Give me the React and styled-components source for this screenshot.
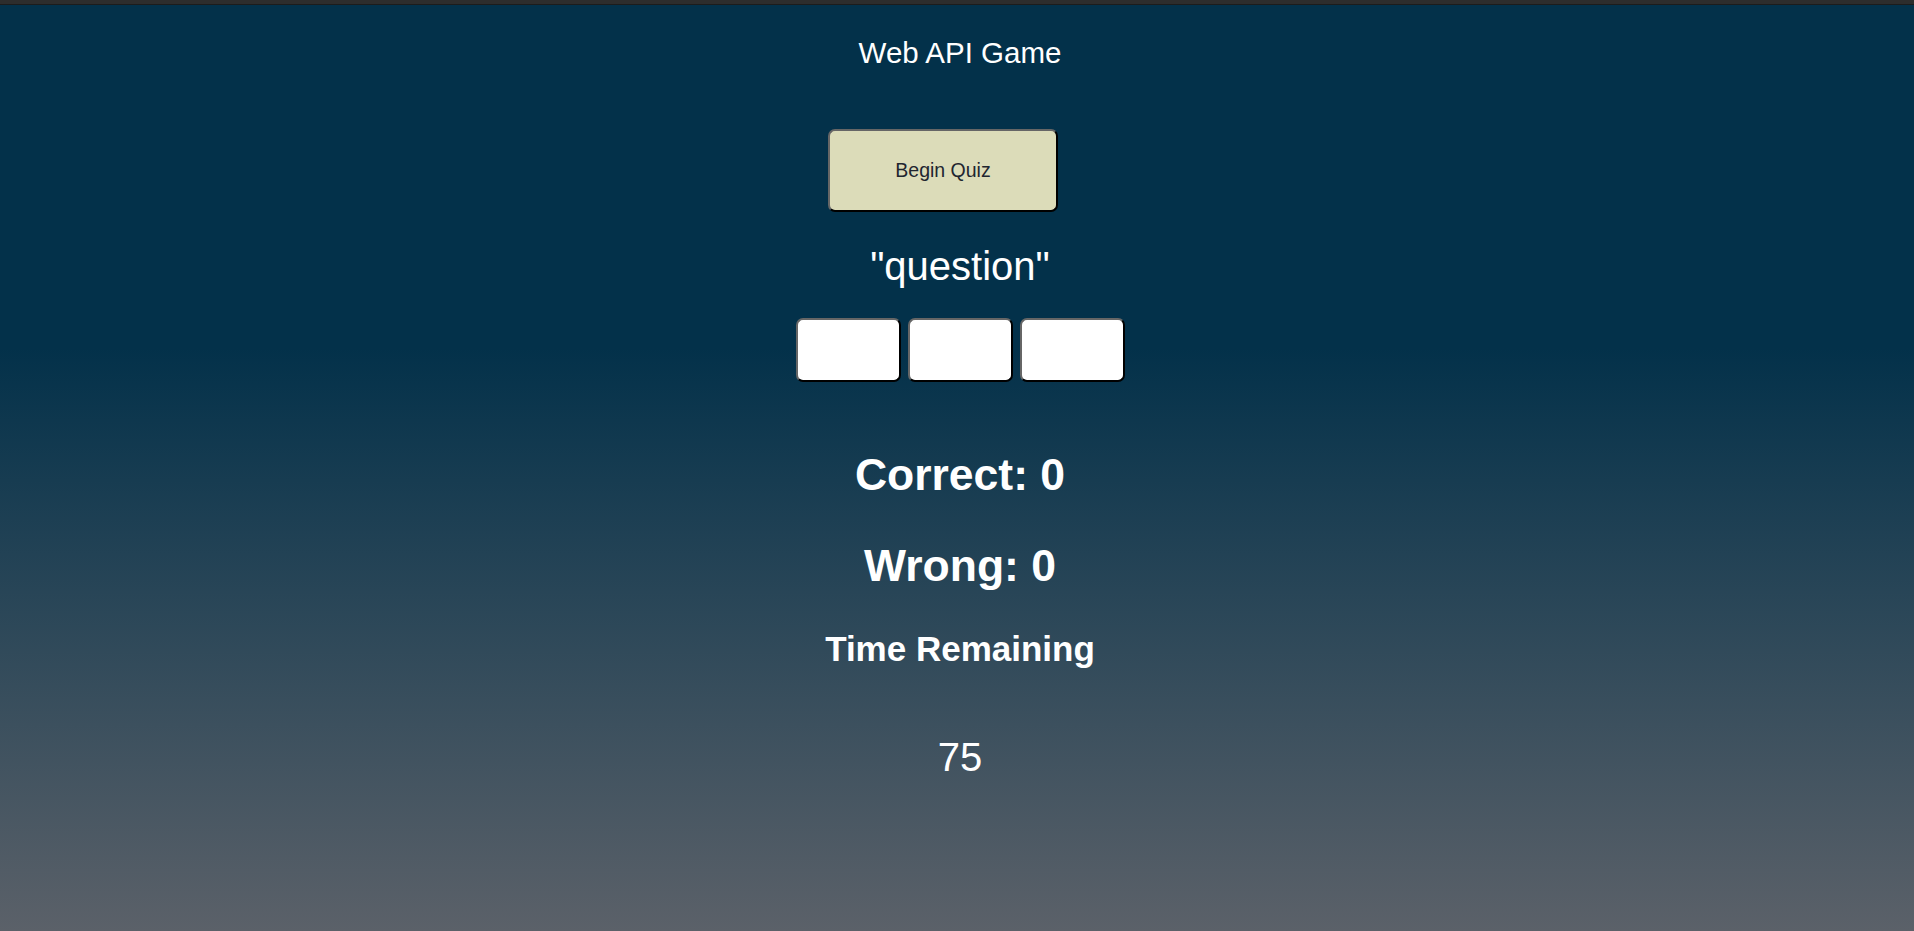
import React from 'react';
import styled, { createGlobalStyle } from 'styled-components';

const GlobalStyle = createGlobalStyle`
    html, body {
        margin: 0;
        padding: 0;
        height: 100%;
    }
    body {
        font-family: "Liberation Sans", Arial, sans-serif;
        background: #5b6169;
    }
`;

const TopBar = styled.div`
    height: 4px;
    background: #2d2d2d;
    border-bottom: 1px solid #1c1c1c;
`;

const Page = styled.main`
    min-height: 926px;
    box-sizing: border-box;
    padding-left: 6px;
    display: flex;
    flex-direction: column;
    align-items: center;
    color: #fff;
    background: linear-gradient(180deg, #03314a 0%, #03314a 37%, #5b6169 100%);
`;

const Title = styled.header`
    margin-top: 33px;
    font-size: 29.5px;
    line-height: 1;
`;

const StartButton = styled.button`
    margin-top: 61px;
    margin-right: 34px;
    width: 230px;
    height: 83px;
    box-sizing: border-box;
    background: #dcdcb9;
    color: #1f2630;
    font-family: "Liberation Sans", Arial, sans-serif;
    font-size: 19.5px;
    border: 2px solid;
    border-color: #666 #000 #000 #666;
    border-radius: 7px;
    cursor: pointer;
`;

const Question = styled.h2`
    margin: 34px 0 0;
    font-size: 40px;
    font-weight: normal;
    line-height: 1;
`;

const Choices = styled.div`
    margin-top: 32px;
    display: flex;
    gap: 7px;
`;

const Choice = styled.button`
    width: 105px;
    height: 64px;
    box-sizing: border-box;
    background: #fff;
    border: 2px solid;
    border-color: #666 #000 #000 #666;
    border-radius: 7px;
`;

const Stat = styled.h1`
    margin: ${p => p.$gap}px 0 0;
    font-size: ${p => p.$size}px;
    font-weight: bold;
    line-height: 1;
`;

const Timer = styled.div`
    margin-top: 71px;
    font-size: 40px;
    line-height: 1;
`;

export default function App() {
    return (
        <>
            <GlobalStyle />
            <TopBar />
            <Page>
                <Title>Web API Game</Title>
                <StartButton>Begin Quiz</StartButton>
                <Question>"question"</Question>
                <Choices>
                    <Choice />
                    <Choice />
                    <Choice />
                </Choices>
                <Stat $gap={71} $size={44.5}>Correct: 0</Stat>
                <Stat $gap={47} $size={44.5}>Wrong: 0</Stat>
                <Stat $gap={42} $size={35}>Time Remaining</Stat>
                <Timer>75</Timer>
            </Page>
        </>
    );
}
